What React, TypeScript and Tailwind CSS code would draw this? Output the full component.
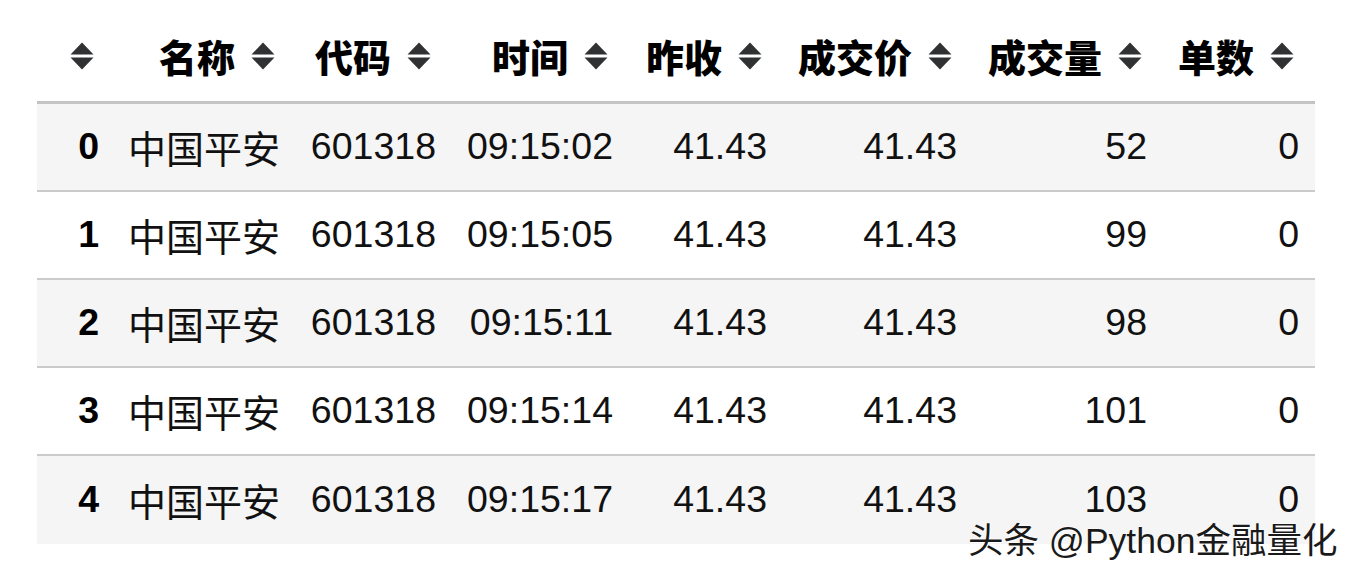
import React from "react";

const cols = [78, 181, 156, 177, 154, 190, 190, 152];
const gridStyle = { gridTemplateColumns: cols.map((c) => `${c}px`).join(" ") };

const headers = ["", "名称", "代码", "时间", "昨收", "成交价", "成交量", "单数"];

const rows = [
  ["0", "中国平安", "601318", "09:15:02", "41.43", "41.43", "52", "0"],
  ["1", "中国平安", "601318", "09:15:05", "41.43", "41.43", "99", "0"],
  ["2", "中国平安", "601318", "09:15:11", "41.43", "41.43", "98", "0"],
  ["3", "中国平安", "601318", "09:15:14", "41.43", "41.43", "101", "0"],
  ["4", "中国平安", "601318", "09:15:17", "41.43", "41.43", "103", "0"],
];

const font = "font-['Liberation_Sans','Noto_Sans_CJK_SC',sans-serif]";

function SortIcon() {
  return (
    <svg width="24" height="28" viewBox="0 0 24 28" className="shrink-0">
      <polygon points="12,0.5 23.5,12.5 0.5,12.5" fill="#2f3133" />
      <polygon points="0.5,15.5 23.5,15.5 12,27.5" fill="#2f3133" />
    </svg>
  );
}

export default function App() {
  return (
    <div className={`relative w-[1356px] h-[578px] overflow-hidden bg-white pl-[37px] ${font} text-[#111]`}>
      <div className="w-[1278px]">
        <div className="grid h-[104px] border-b-[3px] border-[#c4c4c4] pt-[10px]" style={gridStyle}>
          {headers.map((h, i) => (
            <div key={i} className="flex items-center justify-end gap-[16px] pr-[21px] text-[38px] leading-none font-black text-black">
              {h && <span className="font-['Noto_Sans_CJK_SC',sans-serif]">{h}</span>}
              <SortIcon />
            </div>
          ))}
        </div>
        {rows.map((r, ri) => (
          <div
            key={ri}
            className={`grid h-[88px] ${ri % 2 === 0 ? "bg-[#f5f5f6]" : "bg-white"} ${ri < rows.length - 1 ? "border-b-2 border-[#cbcbcb]" : ""}`}
            style={gridStyle}
          >
            {r.map((c, ci) => (
              <div
                key={ci}
                className={`flex items-center justify-end pr-[16px] leading-none ${ci === 0 ? "font-bold text-black" : ""} ${ci === 1 ? "font-['Noto_Sans_CJK_SC',sans-serif] text-[38px]" : "text-[37.5px]"}`}
              >
                {c}
              </div>
            ))}
          </div>
        ))}
      </div>
      <div className="absolute left-[968px] top-[519px] text-[35.5px] leading-[44px] text-[#1a1a1a] font-['Liberation_Sans','Noto_Sans_CJK_SC',sans-serif] [text-shadow:0_0_2px_#fff,0_0_2px_#fff,1px_1px_1px_#fff]">
        头条 @Python金融量化
      </div>
    </div>
  );
}
